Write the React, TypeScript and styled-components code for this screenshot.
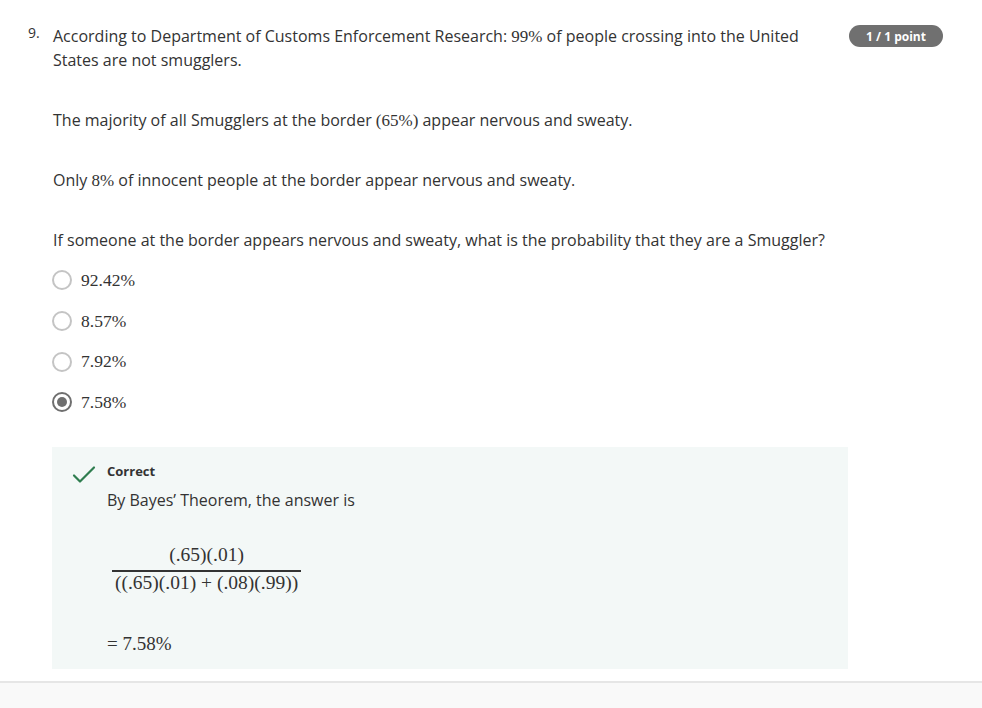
import React from "react";
import styled, { createGlobalStyle } from "styled-components";

const Global = createGlobalStyle`
  html, body { margin: 0; padding: 0; background: #ffffff; }
  body { font-family: "Open Sans", "Liberation Sans", sans-serif; color: #333333; }
  * { box-sizing: border-box; }
`;

const Page = styled.div`
  display: flex;
  flex-direction: column;
  min-height: 708px;
`;

const Question = styled.div`
  display: flex;
  align-items: flex-start;
  padding-top: 24px;
`;

const Num = styled.div`
  width: 53px;
  padding-left: 28px;
  font-size: 14px;
  line-height: 18px;
  color: #333;
`;

const Content = styled.div`
  width: 795px;
  display: flex;
  flex-direction: column;
`;

const Para = styled.p`
  margin: 0 0 36px 0;
  font-size: 16px;
  line-height: 24px;
`;

const Prompt = styled.p`
  margin: 0 0 8px 0;
  font-size: 16px;
  line-height: 24px;
`;

const M = styled.span`
  font-family: "Liberation Serif", "DejaVu Serif", serif;
  font-size: 17px;
  line-height: 16px;
`;

const Badge = styled.div`
  margin-left: 1px;
  width: 94px;
  height: 22px;
  border-radius: 11px;
  background: #707070;
  color: #ffffff;
  font-size: 12px;
  font-weight: 700;
  display: flex;
  align-items: center;
  justify-content: center;
  margin-top: 1px;
`;

const Options = styled.div`
  display: flex;
  flex-direction: column;
`;

const Option = styled.label`
  display: flex;
  align-items: center;
  height: 40.7px;
  gap: 9px;
  margin-left: -1px;
`;

const Radio = styled.span<{ $checked?: boolean }>`
  width: 20px;
  height: 20px;
  border-radius: 50%;
  border: 2px solid ${(p) => (p.$checked ? "#6f6f6f" : "#c4c4c4")};
  display: flex;
  align-items: center;
  justify-content: center;
  &::after {
    content: "";
    width: 10px;
    height: 10px;
    border-radius: 50%;
    background: ${(p) => (p.$checked ? "#6f6f6f" : "transparent")};
  }
`;

const OptText = styled.span`
  font-family: "Liberation Serif", "DejaVu Serif", serif;
  font-size: 17.5px;
  color: #333;
`;

const Feedback = styled.div`
  margin-top: 24px;
  margin-left: -1px;
  background: #f3f8f7;
  display: flex;
  padding: 15px 20px 20px 20px;
  height: 222px;
`;

const IconCol = styled.div`
  width: 35px;
`;

const FbBody = styled.div`
  display: flex;
  flex-direction: column;
`;

const FbTitle = styled.div`
  font-size: 13px;
  font-weight: 700;
  line-height: 18px;
  color: #333;
`;

const FbText = styled.div`
  margin-top: 8px;
  font-size: 16px;
  line-height: 24px;
`;

const Frac = styled.div`
  margin-top: 32px;
  margin-left: 5px;
  display: inline-flex;
  flex-direction: column;
  align-items: center;
  align-self: flex-start;
  font-family: "Liberation Serif", "DejaVu Serif", serif;
  font-size: 19.5px;
  line-height: 22px;
  color: #333;
`;

const Numer = styled.div`
  padding: 0 2px 4px;
`;

const Denom = styled.div`
  border-top: 2px solid #333;
  padding: 0 3px;
`;

const Result = styled.div`
  margin-top: 38px;
  font-family: "Liberation Serif", "DejaVu Serif", serif;
  font-size: 19px;
  line-height: 24px;
  color: #333;
`;

const Footer = styled.div`
  margin-top: 12px;
  border-top: 2px solid #e6e6e6;
  background: #f9f9f9;
  flex: 1;
`;

export default function App() {
  return (
    <Page>
      <Global />
      <Question>
        <Num>9.</Num>
        <Content>
          <Para>
            According to Department of Customs Enforcement Research: <M>99%</M> of people crossing into the United States are not smugglers.
          </Para>
          <Para>
            The majority of all Smugglers at the border <M>(65%)</M> appear nervous and sweaty.
          </Para>
          <Para>
            Only <M>8%</M> of innocent people at the border appear nervous and sweaty.
          </Para>
          <Prompt>
            If someone at the border appears nervous and sweaty, what is the probability that they are a Smuggler?
          </Prompt>
          <Options>
            {["92.42%", "8.57%", "7.92%", "7.58%"].map((o, i) => (
              <Option key={o}>
                <Radio $checked={i === 3} />
                <OptText>{o}</OptText>
              </Option>
            ))}
          </Options>
          <Feedback>
            <IconCol>
              <svg width="24" height="24" viewBox="0 0 24 24" fill="none">
                <path d="M2 13.5 L8 19.5 L22 5.5" stroke="#2e7d4f" strokeWidth="2.2" strokeLinecap="round" strokeLinejoin="round" />
              </svg>
            </IconCol>
            <FbBody>
              <FbTitle>Correct</FbTitle>
              <FbText>By Bayes’ Theorem, the answer is</FbText>
              <Frac>
                <Numer>(.65)(.01)</Numer>
                <Denom>((.65)(.01) + (.08)(.99))</Denom>
              </Frac>
              <Result>= 7.58%</Result>
            </FbBody>
          </Feedback>
        </Content>
        <Badge>1 / 1 point</Badge>
      </Question>
      <Footer />
    </Page>
  );
}
